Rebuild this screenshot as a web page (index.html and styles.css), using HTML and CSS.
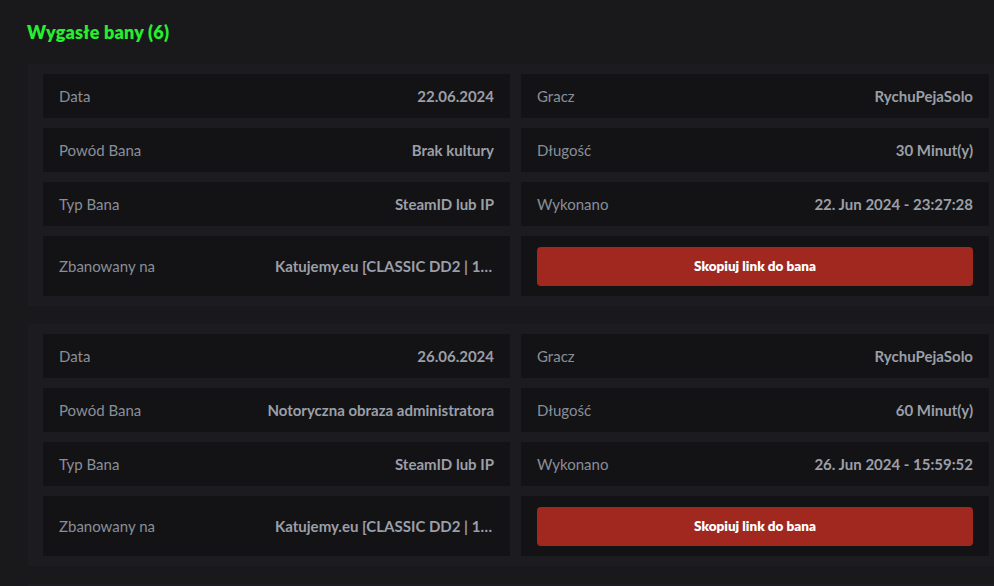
FILE: index.html
```html
<!DOCTYPE html>
<html lang="pl">
<head>
<meta charset="utf-8">
<title>Wygasłe bany</title>
<link rel="stylesheet" href="styles.css">
</head>
<body>
<main class="page">
  <h2 class="section-title">Wygasłe bany (6)</h2>
  <div class="ban-list">
    <section class="ban-card">
      <div class="cell"><span class="label">Data</span><span class="value">22.06.2024</span></div>
      <div class="cell"><span class="label">Gracz</span><span class="value">RychuPejaSolo</span></div>
      <div class="cell"><span class="label">Powód Bana</span><span class="value">Brak kultury</span></div>
      <div class="cell"><span class="label">Długość</span><span class="value">30 Minut(y)</span></div>
      <div class="cell"><span class="label">Typ Bana</span><span class="value">SteamID lub IP</span></div>
      <div class="cell"><span class="label">Wykonano</span><span class="value">22. Jun 2024 - 23:27:28</span></div>
      <div class="cell cell-tall"><span class="label">Zbanowany na</span><span class="value value-clip">Katujemy.eu [CLASSIC DD2 | 128 TICK]</span></div>
      <div class="cell cell-tall"><button class="copy-btn" type="button">Skopiuj link do bana</button></div>
    </section>
    <section class="ban-card">
      <div class="cell"><span class="label">Data</span><span class="value">26.06.2024</span></div>
      <div class="cell"><span class="label">Gracz</span><span class="value">RychuPejaSolo</span></div>
      <div class="cell"><span class="label">Powód Bana</span><span class="value">Notoryczna obraza administratora</span></div>
      <div class="cell"><span class="label">Długość</span><span class="value">60 Minut(y)</span></div>
      <div class="cell"><span class="label">Typ Bana</span><span class="value">SteamID lub IP</span></div>
      <div class="cell"><span class="label">Wykonano</span><span class="value">26. Jun 2024 - 15:59:52</span></div>
      <div class="cell cell-tall"><span class="label">Zbanowany na</span><span class="value value-clip">Katujemy.eu [CLASSIC DD2 | 128 TICK]</span></div>
      <div class="cell cell-tall"><button class="copy-btn" type="button">Skopiuj link do bana</button></div>
    </section>
    <section class="ban-card ban-card-stub"></section>
  </div>
</main>
</body>
</html>
```

FILE: styles.css
```css
html, body {
  margin: 0;
  height: 100%;
  overflow: hidden;
  background: #19191c;
}

body {
  font-family: Lato, "Noto Sans", "Liberation Sans", sans-serif;
  font-size: 15px;
  color: #8b8f97;
}

.page {
  padding: 0 0 0 28px;
}

.section-title {
  margin: 0 0 0 -1px;
  padding-top: 21px;
  height: 43px;
  box-sizing: border-box;
  font-size: 18px;
  font-weight: 800;
  color: #26ee30;
  line-height: 22px;
  letter-spacing: 0.2px;
}

.ban-list {
  display: flex;
  flex-direction: column;
  gap: 18px;
  margin-top: 21px;
  width: 976px;
}

.ban-card {
  background: #1c1c20;
  padding: 10px 15px;
  display: grid;
  grid-template-columns: 467px 468px;
  column-gap: 11px;
  row-gap: 10px;
}

.ban-card-stub {
  height: 40px;
}

.cell {
  background: #131316;
  height: 44px;
  padding: 0 16px;
  box-sizing: border-box;
  display: flex;
  align-items: center;
  justify-content: space-between;
  gap: 16px;
  min-width: 0;
}

.cell-tall {
  height: 60px;
}

.label {
  white-space: nowrap;
  color: #8a8e96;
}

.value {
  font-weight: 700;
  color: #9b9fa7;
  white-space: nowrap;
}

.value-clip {
  max-width: 219px;
  overflow: hidden;
  text-overflow: ellipsis;
}

.copy-btn {
  flex: 1;
  height: 39px;
  border: 0;
  border-radius: 4px;
  background: #a0281f;
  color: #ffffff;
  font-family: inherit;
  font-size: 13.5px;
  font-weight: 800;
  cursor: pointer;
}
```
